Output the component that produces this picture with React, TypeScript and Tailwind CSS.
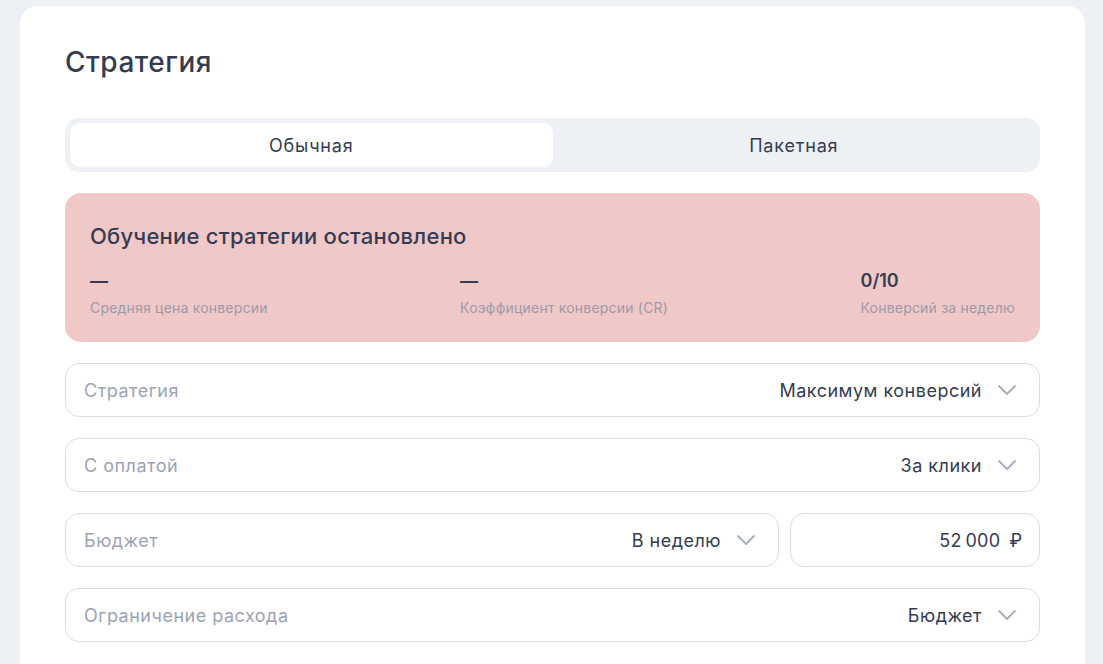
import { ReactNode } from "react"

const font = { fontFamily: "Inter, 'Noto Sans', sans-serif" }

function Chevron() {
  return (
    <svg width="20" height="12" viewBox="0 0 20 12" fill="none" className="shrink-0">
      <path d="M2 2l8 8 8-8" stroke="#a6adbd" strokeWidth="1.8" strokeLinecap="round" strokeLinejoin="round" />
    </svg>
  )
}

function Field({ label, value, className = "" }: { label?: string; value: ReactNode; className?: string }) {
  return (
    <div
      className={`flex h-[54px] items-center justify-between rounded-[14px] border border-[#d9dde5] bg-white pl-[18px] pr-[22px] ${className}`}
    >
      <span className="text-[18px] tracking-[0.5px] text-[#9ca3b4]">{label}</span>
      <div className="flex items-center gap-[15px]">
        <span className="text-[18px] tracking-[0.5px] text-[#353c52]">{value}</span>
        <Chevron />
      </div>
    </div>
  )
}

function Stat({ value, label }: { value: string; label: string }) {
  return (
    <div className="flex flex-col">
      <span className="text-[18px] font-semibold leading-[26px] text-[#353c52]">{value}</span>
      <span className="mt-[5px] text-[14px] leading-[18px] tracking-[0.2px] text-[#9a9aab]">{label}</span>
    </div>
  )
}

export default function App() {
  return (
    <div className="min-h-[664px] bg-[#edf0f5] px-[20px] pt-[6px]" style={font}>
      <div className="h-[700px] w-[1065px] rounded-[18px] bg-white px-[45px] pt-[38px]">
        <h1 className="text-[28px] font-medium leading-[36px] tracking-[0.5px] text-[#353c52]">Стратегия</h1>

        <div className="mt-[38px] grid grid-cols-2 rounded-[14px] bg-[#edf0f5] p-[5px]">
          <div className="flex h-[44px] items-center justify-center rounded-[10px] bg-white text-[18px] tracking-[0.8px] text-[#353c52]">
            Обычная
          </div>
          <div className="flex h-[44px] items-center justify-center text-[18px] tracking-[0.8px] text-[#353c52]">
            Пакетная
          </div>
        </div>

        <div className="mt-[21px] h-[149px] rounded-[16px] bg-[#f1c8c8] px-[25px] pt-[27px]">
          <h2 className="text-[22px] font-medium leading-[32px] tracking-[0.25px] text-[#353c52]">
            Обучение стратегии остановлено
          </h2>
          <div className="mt-[16px] flex justify-between">
            <Stat value="—" label="Средняя цена конверсии" />
            <Stat value="—" label="Коэффициент конверсии (CR)" />
            <Stat value="0/10" label="Конверсий за неделю" />
          </div>
        </div>

        <div className="mt-[21px] flex flex-col gap-[21px]">
          <Field label="Стратегия" value="Максимум конверсий" />
          <Field label="С оплатой" value="За клики" />
          <div className="flex gap-[11px]">
            <Field label="Бюджет" value="В неделю" className="flex-1" />
            <div className="flex h-[54px] w-[250px] items-center justify-end gap-[9px] rounded-[14px] border border-[#d9dde5] bg-white pr-[17px] text-[18px] text-[#353c52]">
              <span className="tracking-[0.3px]">52&thinsp;000</span>
              <span>₽</span>
            </div>
          </div>
          <Field label="Ограничение расхода" value="Бюджет" />
        </div>
      </div>
    </div>
  )
}
